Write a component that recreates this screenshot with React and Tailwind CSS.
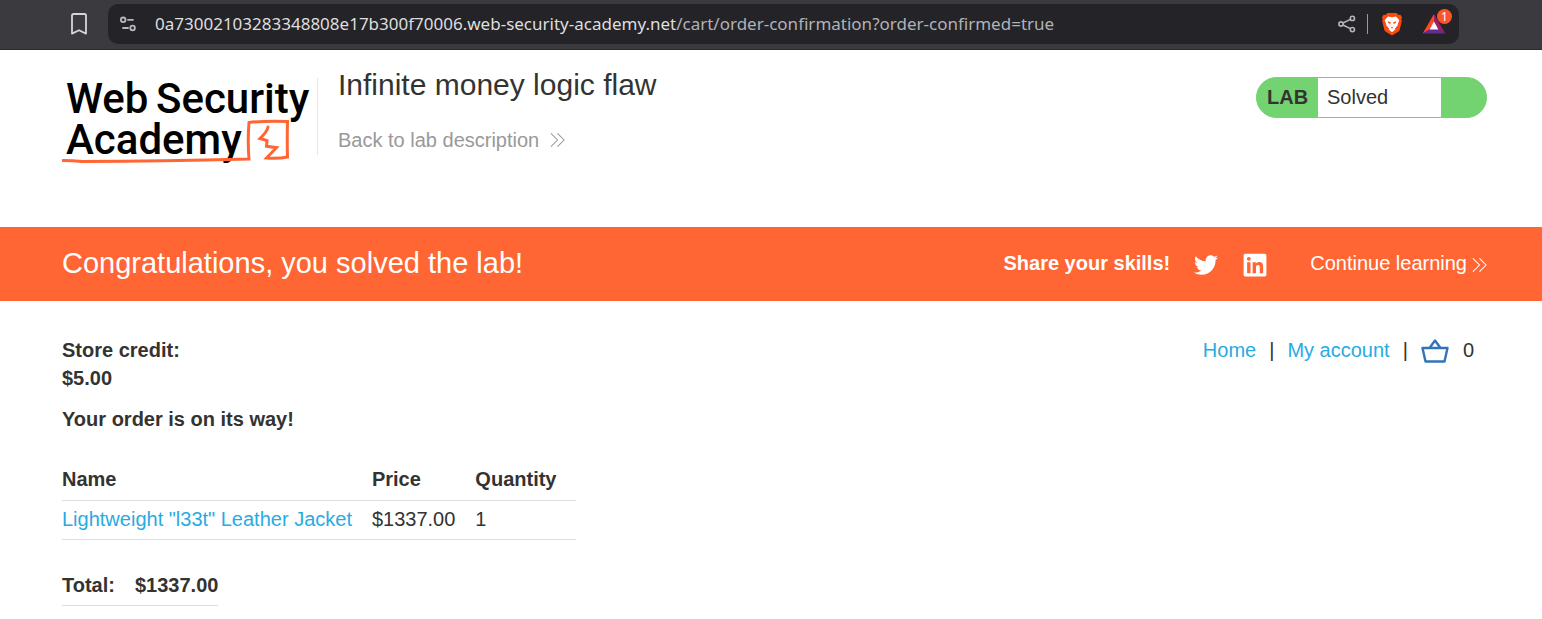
import React from "react";
import { FaTwitter, FaLinkedin } from "react-icons/fa";

function BrowserBar() {
  return (
    <div className="flex h-[50px] items-center border-b border-[#2c2b30] bg-[#3b3a3f] pr-[83px] pb-[2px] pl-[68px]">
      <button aria-label="Bookmark this page" className="mr-[18px] flex w-[22px] justify-center">
        <svg viewBox="0 0 16 22" className="h-[22px] w-4" fill="none" stroke="#d6d6d8" strokeWidth="1.8" strokeLinejoin="round">
          <path d="M1 2.6Q1 1 2.6 1h10.8Q15 1 15 2.6V20.6L8 17.2 1 20.6Z" />
        </svg>
      </button>
      <div className="flex h-10 min-w-0 flex-1 items-center rounded-[10px] bg-[#242328] pr-[5px] pl-3">
        <button aria-label="Site information" className="shrink-0">
          <svg viewBox="0 0 16 16" className="h-4 w-4" fill="none" stroke="#b9b9bc" strokeWidth="1.8" strokeLinecap="round">
            <circle cx="3.200" cy="3.800" r="2.300" />
            <path d="M8 3.800H13" />
            <circle cx="12.600" cy="12" r="2.300" />
            <path d="M3 12H8" />
          </svg>
        </button>
        <div className="ml-[19px] min-w-0 flex-1 truncate font-['Noto_Sans',sans-serif] text-[17px] leading-6 text-[#b2b2b6]">
          <span className="text-[#dededf]">0a73002103283348808e17b300f70006.web-security-academy.net</span>/cart/order-confirmation?order-confirmed=true
        </div>
        <button aria-label="Share" className="shrink-0">
          <svg viewBox="0 0 18 18" className="h-[18px] w-[18px]" fill="none" stroke="#b5b5b8" strokeWidth="1.6">
            <circle cx="3" cy="9" r="2.1" />
            <circle cx="14.4" cy="3.4" r="2.1" />
            <circle cx="14.4" cy="14.6" r="2.1" />
            <path d="M5 8 12.4 4.400M5 10l7.400 3.600" />
          </svg>
        </button>
        <div className="ml-[11px] h-5 w-px shrink-0 bg-[#9a9a9e]" />
        <button aria-label="Brave Shields" className="ml-[13px] shrink-0">
          <svg viewBox="0 0 22 24" className="h-6 w-[22px]">
            <path d="M6.500 1h9L17.500 3l2-.3 1.500 2.800-.7 2 .5 1.500-2 8.500q-.5 1.600-2 2.600L11 23.600 5.200 20.100q-1.500-1-2-2.600L1.200 9l.5-1.500-.7-2 1.500-2.800 2 .3Z" fill="#fb4b10" />
            <path d="M7 4.500 11 5.200 15 4.500 18.300 8.300 17 11.500 16.500 13.800 14 16.200 14.300 17.600 11 20.300 7.700 17.600 8 16.200 5.500 13.800 5 11.500 3.700 8.300Z" fill="#fff" />
            <path d="M6.500 9.300 9.800 10.300 9.300 12 7.500 11.300ZM15.500 9.300 12.200 10.300 12.700 12 14.500 11.300ZM9.300 14.300 11 15.300 12.700 14.300 11 16.800Z" fill="#fb4b10" />
          </svg>
        </button>
        <button aria-label="Brave Rewards" className="ml-[19px] shrink-0">
          <svg viewBox="0 0 32 32" className="h-8 w-8">
            <path d="M12 6 .7 25.500 8 21.500 12 14.500Z" fill="#ff4724" />
            <path d="M12 6V14.500L16 21.500 23.300 25.500Z" fill="#9e1f63" />
            <path d="M.7 25.500H23.300L16 21H8Z" fill="#662d91" />
            <path d="M12 13.500 7.600 21.400H16.400Z" fill="#fff" />
            <circle cx="22.500" cy="8.500" r="7.500" fill="#fb542b" />
            <text x="22.500" y="13" textAnchor="middle" fontSize="12" fontFamily="Noto Sans, sans-serif" fill="#fff">1</text>
          </svg>
        </button>
      </div>
    </div>
  );
}

function Chevrons({ className }) {
  return (
    <svg viewBox="0 0 16 16" className={className} fill="none" stroke="currentColor" strokeWidth="1.1" aria-hidden="true">
      <path d="M1 1 8 8 1 15M8 1l7 7-7 7" />
    </svg>
  );
}

function Logo() {
  return (
    <svg viewBox="0 0 255 92" className="h-[92px] w-[255px] shrink-0" role="img" aria-label="Web Security Academy">
      <g fontFamily="Roboto, sans-serif" fontSize="42" fontWeight="500" fill="#000">
        <text x="4" y="38">Web</text>
        <text x="94" y="38">Security</text>
        <text x="4" y="79">Academy</text>
      </g>
      <path
        d="M1 85.500Q10 85.500 20 86.500Q100 86 187 84Q185.500 66 187 47.500Q206 45.500 225.500 46.500Q225 65 225.500 82Q216 84 204.500 83L214.500 72.700 204.500 71.300 205 65.500 198 63.500Q205 57 206 52"
        fill="none"
        stroke="#ff6633"
        strokeWidth="3"
        strokeLinecap="round"
      />
    </svg>
  );
}

function LabHeader() {
  return (
    <header className="flex h-[177px] items-start pt-[25px] pr-[55px] pl-[62px]">
      <Logo />
      <div className="mt-[3px] h-[77px] border-l border-[#e6e6e6] pl-5">
        <h1 className="-mt-[11px] text-[30px] leading-9">Infinite money logic flaw</h1>
        <a href="#lab" className="mt-[23px] flex items-center text-[20px] leading-7 text-[#999]">
          Back to lab description
          <Chevrons className="ml-[11px] h-4 w-[15px]" />
        </a>
      </div>
      <div className="mt-[2px] ml-auto flex h-[41px] overflow-hidden rounded-full border border-[#73d370] bg-[#73d370] text-[20px] leading-[39px]">
        <b className="w-[61px] pl-[10px]">LAB</b>
        <span className="w-[123px] bg-white pl-[9px]">Solved</span>
        <span className="w-[45px]" />
      </div>
    </header>
  );
}

function SolvedBanner() {
  return (
    <section className="flex h-[74px] items-center bg-[#ff6633] pr-[55px] pb-[2px] pl-[62px] text-[20px] text-white">
      <h2 className="pt-[2px] text-[29px]">Congratulations, you solved the lab!</h2>
      <b className="ml-auto">Share your skills!</b>
      <a href="#twitter" aria-label="Share on Twitter" className="mt-1 ml-6">
        <FaTwitter className="h-6 w-6" />
      </a>
      <a href="#linkedin" aria-label="Share on LinkedIn" className="mt-1 ml-[25px]">
        <FaLinkedin className="h-[26px] w-6" />
      </a>
      <a href="#learning" className="ml-[43px] flex items-center">
        Continue learning
        <Chevrons className="mt-1 ml-[5px] h-4 w-[15px]" />
      </a>
    </section>
  );
}

function Order() {
  return (
    <main className="pt-[35px] pr-[68px] pb-3 pl-[62px] text-[20px] leading-7">
      <div className="flex justify-between">
        <p className="font-bold">
          Store credit:
          <br />
          $5.00
        </p>
        <nav className="flex h-7 items-center">
          <a href="#home" className="text-[#29abe2]">Home</a>
          <span className="mx-[13px]">|</span>
          <a href="#account" className="text-[#29abe2]">My account</a>
          <span className="mx-[13px]">|</span>
          <a href="#cart" aria-label="Cart" className="pt-[2px]">
            <svg viewBox="0 0 28 26" className="h-[26px] w-7" fill="none" stroke="#3374b8" strokeWidth="2.4" strokeLinejoin="round">
              <path d="M1.500 10H26.500L23.500 23.500H4.500ZM8.500 10 14 2.500 19.500 10" />
            </svg>
          </a>
          <span className="ml-[14px]">0</span>
        </nav>
      </div>
      <h4 className="mt-[13px] font-bold">Your order is on its way!</h4>
      <table className="mt-[27px] border-collapse text-left">
        <thead>
          <tr className="h-10 border-b border-[#dedede]">
            <th className="pr-5 pb-[2px]">Name</th>
            <th className="pr-5 pb-[2px]">Price</th>
            <th className="pr-5 pb-[2px]">Quantity</th>
          </tr>
        </thead>
        <tbody>
          <tr className="h-[39px] border-b border-[#dedede]">
            <td className="pr-5 pb-[2px]"><a href="#product" className="text-[#29abe2]">Lightweight "l33t" Leather Jacket</a></td>
            <td className="pr-5 pb-[2px]">$1337.00</td>
            <td className="pr-5 pb-[2px]">1</td>
          </tr>
        </tbody>
      </table>
      <table className="mt-[27px] border-collapse text-left">
        <tbody>
          <tr className="h-[39px] border-b border-[#dedede]">
            <th className="pr-5 pb-[2px]">Total:</th>
            <th className="pb-[2px]">$1337.00</th>
          </tr>
        </tbody>
      </table>
    </main>
  );
}

export default function App() {
  return (
    <div className="min-h-screen bg-white font-['Liberation_Sans',Arial,sans-serif] text-[#333332]">
      <BrowserBar />
      <LabHeader />
      <SolvedBanner />
      <Order />
    </div>
  );
}
